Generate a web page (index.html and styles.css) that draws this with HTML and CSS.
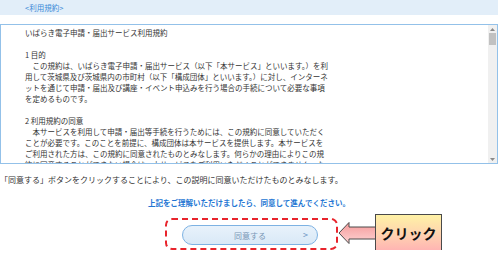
FILE: index.html
```html
<!DOCTYPE html>
<html lang="ja">
<head>
  <meta charset="UTF-8">
  <title>利用規約 - いばらき電子申請・届出サービス</title>
  <meta name="viewport" content="width=device-width, initial-scale=1">
  <link rel="stylesheet" href="styles.css">
</head>
<body>
  <div class="page">
    <div class="section-title">&lt;利用規約&gt;</div>

    <div class="terms">
      <div class="terms-body">
        <p>いばらき電子申請・届出サービス利用規約</p>

        <p>1 目的<br>
        　この規約は、いばらき電子申請・届出サービス（以下「本サービス」といいます。）を利<br>
        用して茨城県及び茨城県内の市町村（以下「構成団体」といいます。）に対し、インターネ<br>
        ットを通じて申請・届出及び講座・イベント申込みを行う場合の手続について必要な事項<br>
        を定めるものです。</p>

        <p>2 利用規約の同意<br>
        　本サービスを利用して申請・届出等手続を行うためには、この規約に同意していただく<br>
        ことが必要です。このことを前提に、構成団体は本サービスを提供します。本サービスを<br>
        ご利用された方は、この規約に同意されたものとみなします。何らかの理由によりこの規<br>
        約に同意することができない場合は、本サービスをご利用いただくことができません。な<br>
        お、この規約に定めのない事項については、各構成団体が定める規定によるものとします。</p>

        <p>3 利用者登録<br>
        （1）本サービスを利用して申請・届出等手続を行う場合は、必要に応じて利用者登録を<br>
        行ってください。</p>
      </div>

      <div class="scrollbar">
        <div class="scroll-btn">
          <svg width="5" height="3" viewBox="0 0 5 3"><path d="M0 3 L2.5 0 L5 3 Z" fill="#8a8a8a"/></svg>
        </div>
        <div class="scroll-track">
          <div class="scroll-thumb"></div>
        </div>
        <div class="scroll-btn">
          <svg width="5" height="3" viewBox="0 0 5 3"><path d="M0 0 L2.5 3 L5 0 Z" fill="#8a8a8a"/></svg>
        </div>
      </div>
    </div>

    <p class="note">「同意する」ボタンをクリックすることにより、この説明に同意いただけたものとみなします。</p>

    <p class="lead">上記をご理解いただけましたら、同意して進んでください。</p>

    <div class="action">
      <div class="highlight">
        <button class="agree-btn" type="button">
          <span>同意する</span>
          <span class="chevron">&gt;</span>
        </button>

        <div class="callout">
          <svg class="arrow" width="38" height="24" viewBox="0 0 38 24">
            <defs>
              <linearGradient id="arrowFill" x1="0" y1="0" x2="0" y2="1">
                <stop offset="0" stop-color="#f59a9a"/>
                <stop offset="1" stop-color="#fdd3d3"/>
              </linearGradient>
            </defs>
            <path d="M1 12 L11 1.5 L11 6 L38 6 L38 18 L11 18 L11 22.5 Z" fill="url(#arrowFill)" stroke="#4a4a4a" stroke-width="1"/>
          </svg>
          <div class="click-label">クリック</div>
        </div>
      </div>
    </div>
  </div>
</body>
</html>
```

FILE: styles.css
```css
body {
  margin: 0;
  font-family: "Noto Sans CJK JP", "Noto Sans", sans-serif;
  color: #333;
  background: #fff;
}

.page {
  width: 498px;
}

.section-title {
  height: 15px;
  line-height: 15px;
  padding-left: 25px;
  background: #e2eef9;
  color: #3a8ad8;
  font-size: 7.5px;
}

.terms {
  box-sizing: border-box;
  display: flex;
  height: 140px;
  margin-top: 9px;
  border: 1px solid #93c1e9;
}

.terms-body {
  flex: 1;
  overflow: hidden;
  padding: 2px 0 0 24px;
  font-size: 7.5px;
  line-height: 11px;
  color: #333;
}

.terms-body p {
  margin: 0 0 11px;
}

.scrollbar {
  display: flex;
  flex-direction: column;
  width: 9px;
  background: #f0f0f0;
}

.scroll-btn {
  display: flex;
  align-items: center;
  justify-content: center;
  height: 8px;
}

.scroll-btn svg {
  display: block;
}

.scroll-track {
  flex: 1;
  padding: 0 1px;
}

.scroll-thumb {
  height: 12px;
  background: #c1c1c1;
}

.note {
  margin: 10px 0 0;
  font-size: 8px;
  line-height: 12px;
  color: #333;
}

.lead {
  margin: 11px 0 0;
  text-align: center;
  font-size: 7.5px;
  line-height: 12px;
  font-weight: bold;
  color: #2476d3;
}

.action {
  display: flex;
  justify-content: center;
  margin-top: 9px;
  padding-left: 5px;
}

.highlight {
  position: relative;
  padding: 5px 18px 3px 15px;
  border: 2px dashed #e8242c;
  border-radius: 7px;
}

.agree-btn {
  position: relative;
  display: flex;
  align-items: center;
  justify-content: center;
  width: 136px;
  height: 20px;
  padding: 0;
  border: 1px solid #7db2e3;
  border-radius: 10px;
  background: linear-gradient(#e8f2fb, #d9e9f7);
  color: #7896b6;
  font-family: inherit;
  font-size: 8px;
}

.chevron {
  position: absolute;
  right: 9px;
  top: 3px;
  font-size: 9px;
  line-height: 12px;
  color: #6590bf;
}

.callout {
  position: absolute;
  left: calc(100% + 2px);
  top: -6px;
  display: flex;
  align-items: center;
}

.arrow {
  display: block;
  margin-right: -1px;
}

.click-label {
  box-sizing: border-box;
  width: 67px;
  height: 38px;
  line-height: 36px;
  text-align: center;
  border: 1px solid #4a4a4a;
  background: linear-gradient(#fff2a6, #ffd2b0 55%, #ffb3b3);
  color: #111;
  font-size: 14px;
  font-weight: bold;
  white-space: nowrap;
}
```
